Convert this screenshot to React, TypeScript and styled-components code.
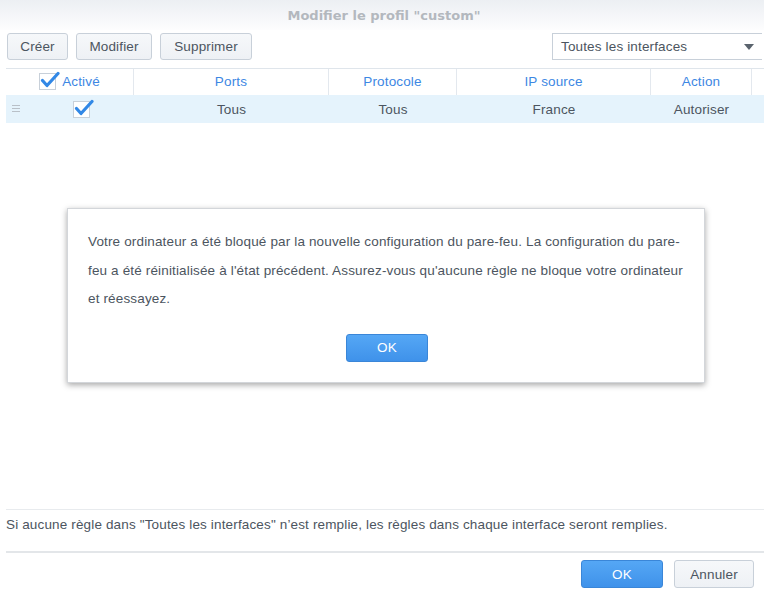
import React from 'react'
import styled, { createGlobalStyle, css } from 'styled-components'

const GlobalStyle = createGlobalStyle`
  html, body {
    margin: 0;
    padding: 0;
    background: #ffffff;
  }
  body {
    font-family: "Liberation Sans", Arial, sans-serif;
    font-size: 13.5px;
    letter-spacing: 0.15px;
    color: #4c5560;
  }
`

const Window = styled.div`
  position: relative;
  width: 764px;
  height: 592px;
  display: flex;
  flex-direction: column;
  background: #fff;
  overflow: hidden;
`

const TitleBar = styled.div`
  height: 30px;
  display: flex;
  align-items: center;
  justify-content: center;
  padding-left: 4px;
  background: linear-gradient(#eceff3, #fdfdfe);
  font-family: "DejaVu Sans", Verdana, sans-serif;
  font-weight: bold;
  font-size: 13px;
  letter-spacing: 0;
  color: #b3b8be;
`

const Toolbar = styled.div`
  display: flex;
  align-items: center;
  gap: 8px;
  padding: 3px 2px 0 7px;
  height: 27px;
`

const baseButton = css`
  height: 27px;
  box-sizing: border-box;
  border-radius: 3px;
  font-family: "Liberation Sans", Arial, sans-serif;
  font-size: 13.5px;
  letter-spacing: 0.15px;
  padding: 0;
  cursor: pointer;
`

const ToolButton = styled.button<{ $w: number }>`
  ${baseButton}
  width: ${(p) => p.$w}px;
  background: linear-gradient(#f6f8fa, #eef1f5);
  border: 1px solid #c8d0d9;
  color: #4c5560;
`

const Spacer = styled.div`
  flex: 1;
`

const Select = styled.div`
  width: 210px;
  height: 27px;
  box-sizing: border-box;
  border: 1px solid #c8d0d9;
  border-right: none;
  background: #fff;
  display: flex;
  align-items: center;
  justify-content: space-between;
  padding: 0 8px 0 8px;
  color: #4c5560;
`

const Caret = styled.span`
  width: 0;
  height: 0;
  border-left: 5px solid transparent;
  border-right: 5px solid transparent;
  border-top: 6px solid #5a636d;
`

const Grid = styled.div`
  margin: 8px 0 0 6px;
  flex: 1;
`

const HeaderRow = styled.div`
  display: grid;
  grid-template-columns: 128px 195px 128px 194px 101px 12px;
  height: 26px;
  border-top: 1px solid #dfe5eb;
`

const HeaderCell = styled.div<{ $last?: boolean }>`
  display: flex;
  align-items: center;
  justify-content: center;
  gap: 6px;
  padding-bottom: 2px;
  color: #3d87e3;
  border-right: ${(p) => (p.$last ? 'none' : '1px solid #e3e8ee')};
`

const DataRow = styled.div`
  display: grid;
  grid-template-columns: 128px 195px 128px 194px 101px;
  height: 28px;
  background: #e5f3fc;
`

const Cell = styled.div`
  display: flex;
  align-items: center;
  justify-content: center;
  color: #4c5560;
`

const FirstCell = styled(Cell)`
  position: relative;
  padding-left: 22px;
`

const Handle = styled.span`
  position: absolute;
  left: 6px;
  top: 10px;
  width: 8px;
  height: 7px;
  background: linear-gradient(
    #b9c0c8 0 1px,
    transparent 1px 3px,
    #b9c0c8 3px 4px,
    transparent 4px 6px,
    #b9c0c8 6px 7px
  );
`

const Box = styled.span`
  position: relative;
  display: inline-block;
  width: 17px;
  height: 17px;
  box-sizing: border-box;
  border: 1px solid #c8d0d9;
  background: #fff;
`

const Check = () => (
  <Box>
    <svg
      width="20"
      height="18"
      viewBox="0 0 20 18"
      style={{ position: 'absolute', left: 0, top: -3 }}
    >
      <path
        d="M2.5 9.5 L7 14.5 L18 2.5"
        fill="none"
        stroke="#3288e6"
        strokeWidth="3.2"
        strokeLinecap="round"
        strokeLinejoin="round"
      />
    </svg>
  </Box>
)

const Note = styled.div`
  margin: 0 0 0 6px;
  border-top: 1px solid #e8ebee;
  border-bottom: 2px solid #e3e6e9;
  height: 44px;
  box-sizing: border-box;
  padding-top: 7px;
  line-height: 16px;
  color: #4c5560;
`

const Footer = styled.div`
  display: flex;
  justify-content: flex-end;
  gap: 11px;
  padding: 7px 10px 4px 0;
  height: 28px;
`

const PrimaryButton = styled.button<{ $w: number }>`
  ${baseButton}
  height: 28px;
  width: ${(p) => p.$w}px;
  background: linear-gradient(#55a7f5, #3f92ea);
  border: 1px solid #3a86d8;
  color: #fff;
`

const SecondaryButton = styled.button<{ $w: number }>`
  ${baseButton}
  height: 28px;
  width: ${(p) => p.$w}px;
  background: linear-gradient(#f6f8fa, #eef1f5);
  border: 1px solid #c8d0d9;
  color: #4c5560;
`

const Overlay = styled.div`
  position: absolute;
  left: 67px;
  top: 208px;
  width: 638px;
  height: 175px;
  box-sizing: border-box;
  background: #fff;
  border: 1px solid #d3d6da;
  box-shadow: 0 2px 6px rgba(0, 0, 0, 0.35);
  padding: 19px 18px 0 20px;
  display: flex;
  flex-direction: column;
  align-items: center;
`

const Message = styled.p`
  margin: 0;
  align-self: stretch;
  line-height: 28.5px;
  color: #4c5560;
`

const DialogActions = styled.div`
  margin-top: 20px;
`

export default function App() {
  return (
    <Window>
      <GlobalStyle />
      <TitleBar>Modifier le profil "custom"</TitleBar>
      <Toolbar>
        <ToolButton $w={61}>Créer</ToolButton>
        <ToolButton $w={76}>Modifier</ToolButton>
        <ToolButton $w={92}>Supprimer</ToolButton>
        <Spacer />
        <Select>
          <span>Toutes les interfaces</span>
          <Caret />
        </Select>
      </Toolbar>
      <Grid>
        <HeaderRow>
          <HeaderCell>
            <Check />
            Activé
          </HeaderCell>
          <HeaderCell>Ports</HeaderCell>
          <HeaderCell>Protocole</HeaderCell>
          <HeaderCell>IP source</HeaderCell>
          <HeaderCell>Action</HeaderCell>
          <HeaderCell $last />
        </HeaderRow>
        <DataRow>
          <FirstCell>
            <Handle />
            <Check />
          </FirstCell>
          <Cell>Tous</Cell>
          <Cell>Tous</Cell>
          <Cell>France</Cell>
          <Cell>Autoriser</Cell>
        </DataRow>
      </Grid>
      <Note>
        Si aucune règle dans "Toutes les interfaces" n’est remplie, les règles dans chaque
        interface seront remplies.
      </Note>
      <Footer>
        <PrimaryButton $w={82}>OK</PrimaryButton>
        <SecondaryButton $w={80}>Annuler</SecondaryButton>
      </Footer>
      <Overlay>
        <Message>
          Votre ordinateur a été bloqué par la nouvelle configuration du pare-feu. La
          configuration du pare-feu a été réinitialisée à l'état précédent. Assurez-vous
          qu'aucune règle ne bloque votre ordinateur et réessayez.
        </Message>
        <DialogActions>
          <PrimaryButton $w={82}>OK</PrimaryButton>
        </DialogActions>
      </Overlay>
    </Window>
  )
}
